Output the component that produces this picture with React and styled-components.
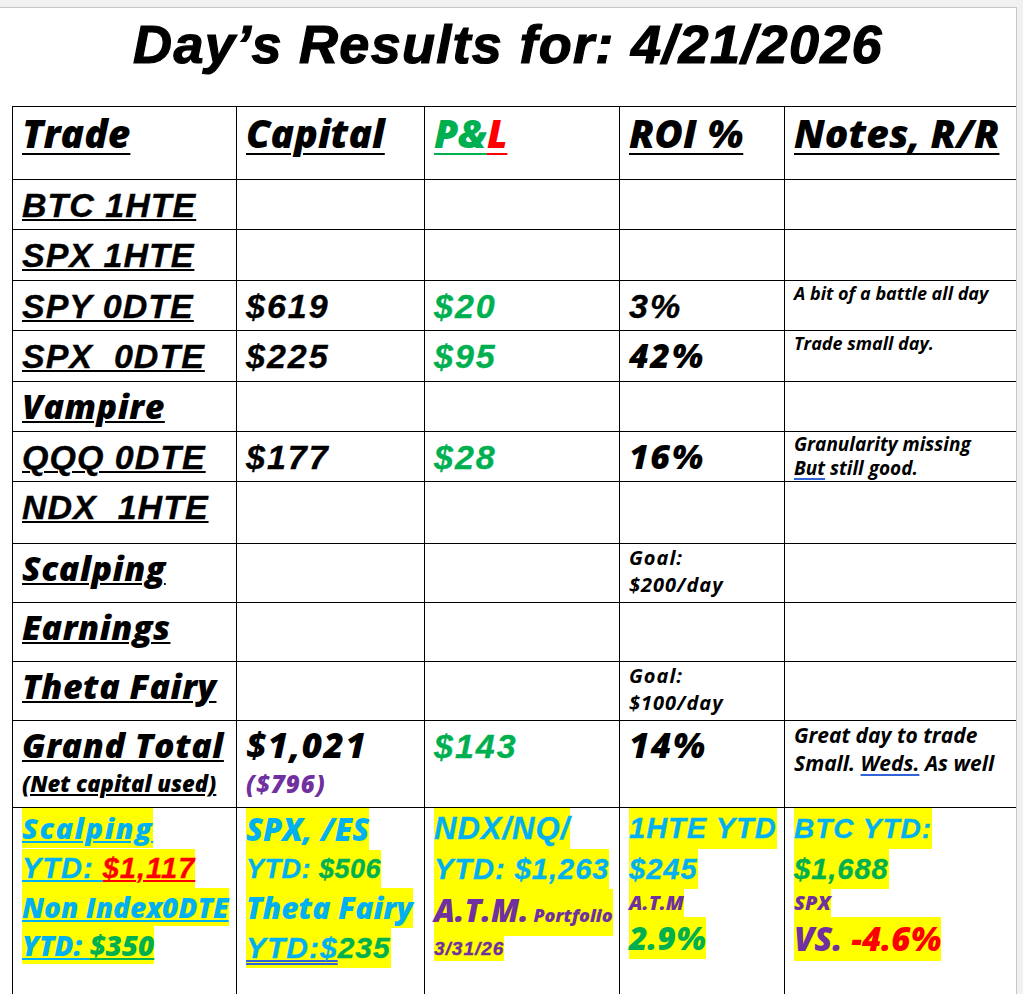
import React from 'react';
import styled, { createGlobalStyle, css } from 'styled-components';

const COL = {
  cyan: '#00b0f0',
  green: '#00b050',
  red: '#ff0000',
  purple: '#7030a0',
  yellow: '#ffff00',
  blueLine: '#2f63d6',
};

const Global = createGlobalStyle`
  html, body { margin: 0; padding: 0; background: #f1f1f1; }
  body { width: 1023px; height: 994px; overflow: hidden; }
`;

const arial = css`
  font-family: "Liberation Sans", Arial, sans-serif;
  font-weight: 700;
  font-style: italic;
  letter-spacing: 1px;
  -webkit-text-stroke: 0.35px currentColor;
`;
const sans = css`
  font-family: "Open Sans", "Liberation Sans", sans-serif;
  font-style: italic;
`;
const fontOf = (f) => (f === 'arial' ? arial : sans);

const Page = styled.div`
  margin-top: 7px;
  width: 1017px;
  height: 987px;
  box-sizing: border-box;
  background: #fff;
  border-top: 1px solid #c6c6c6;
  border-right: 1px solid #c6c6c6;
  overflow: hidden;
`;

const Title = styled.h1`
  margin: 0;
  padding-top: 5px;
  font-family: "Liberation Sans", Arial, sans-serif;
  font-weight: 700;
  font-style: italic;
  font-size: 54px;
  line-height: 62px;
  letter-spacing: 1.3px;
  -webkit-text-stroke: 1.2px #000;
  text-align: center;
  color: #000;
`;

const Table = styled.div`
  margin: 31px 0 0 12px;
  width: 1013px;
  border-top: 1px solid #000;
  border-left: 1px solid #000;
  color: #000;
`;

const Row = styled.div`
  display: grid;
  grid-template-columns: 224px 188px 195px 165px 240px;
  height: ${(p) => p.$h}px;
  box-sizing: border-box;
  border-bottom: 1px solid #000;
`;

const Cell = styled.div`
  box-sizing: border-box;
  border-right: 1px solid #000;
  padding: 0 0 0 9px;
  overflow: hidden;
  display: flex;
  flex-direction: column;
  align-items: flex-start;
`;

const underline = (thick, offset) => css`
  text-decoration: underline;
  text-decoration-thickness: ${thick}px;
  text-underline-offset: ${offset}px;
`;

const Head = styled.span`
  ${sans};
  font-weight: 800;
  font-size: 39px;
  line-height: 46px;
  margin-top: 3px;
  white-space: pre;
  ${(p) => !p.$plain && underline(2, 5)}
`;

const HeadPart = styled.span`
  color: ${(p) => p.$c};
  ${underline(2, 5)}
`;

const Name = styled.span`
  ${(p) => fontOf(p.$f)};
  font-weight: ${(p) => (p.$f === 'arial' ? 700 : 800)};
  font-size: ${(p) => p.$s || 34}px;
  line-height: 40px;
  letter-spacing: ${(p) => (p.$f === 'arial' ? 1 : 0.5)}px;
  padding-top: ${(p) => (p.$f === 'arial' ? 5 : 4)}px;
  white-space: pre;
  ${(p) => underline(p.$ut || 1.5, 2)}
`;

const Sub = styled.span`
  ${sans};
  font-weight: 800;
  font-size: ${(p) => p.$s || 22}px;
  line-height: 30px;
  margin-top: ${(p) => p.$mt || 0}px;
  letter-spacing: ${(p) => p.$ls || 0}px;
  white-space: pre;
  color: ${(p) => p.$c || '#000'};
  ${(p) => p.$u && underline(1.5, 2)}
`;

const Num = styled.span`
  ${(p) => fontOf(p.$f)};
  font-weight: ${(p) => (p.$f === 'arial' ? 700 : 800)};
  font-size: ${(p) => p.$s || 34}px;
  line-height: 40px;
  letter-spacing: ${(p) => (p.$f === 'arial' ? 2 : 1.5)}px;
  padding-top: ${(p) => (p.$f === 'arial' ? 5 : 4)}px;
  color: ${(p) => p.$c || '#000'};
  white-space: pre;
`;

const Note = styled.span`
  ${sans};
  font-weight: 700;
  font-size: ${(p) => p.$s || 18}px;
  line-height: ${(p) => p.$lh || 24}px;
  white-space: pre;
`;

const Spell = styled.span`
  text-decoration: underline;
  text-decoration-color: ${COL.blueLine};
  text-decoration-thickness: 1.5px;
  text-underline-offset: 3px;
`;

const Goal = styled.span`
  ${sans};
  font-weight: 700;
  font-size: 20px;
  line-height: 27px;
  letter-spacing: 1px;
  white-space: pre;
`;

const Hl = styled.span`
  display: block;
  width: fit-content;
  background: ${COL.yellow};
  ${(p) => fontOf(p.$f)};
  font-weight: ${(p) => p.$w || (p.$f === 'arial' ? 700 : 800)};
  font-size: ${(p) => p.$s}px;
  line-height: ${(p) => p.$lh}px;
  margin-top: ${(p) => p.$mt || 0}px;
  ${(p) => p.$ls !== undefined && css`letter-spacing: ${p.$ls}px;`}
  white-space: pre;
`;

const T = styled.span`
  color: ${(p) => p.$c};
  font-size: ${(p) => (p.$s ? `${p.$s}px` : 'inherit')};
  ${(p) =>
    p.$u &&
    css`
      text-decoration: ${p.$u === 'double' ? 'underline double' : 'underline'};
      text-decoration-color: ${p.$uc || p.$c};
      text-decoration-thickness: 1.5px;
      text-underline-offset: 2px;
    `}
`;

const rows = [
  { name: 'BTC 1HTE', f: 'arial', h: 50 },
  { name: 'SPX 1HTE', f: 'arial', h: 51 },
  {
    name: 'SPY 0DTE', f: 'arial', h: 50,
    cap: '$619', pl: '$20', roi: '3%', roiF: 'arial',
    note: ['A bit of a battle all day'],
  },
  {
    name: 'SPX  0DTE', f: 'arial', h: 51,
    cap: '$225', pl: '$95', roi: '42%', roiF: 'sans',
    note: ['Trade small day.'],
  },
  { name: 'Vampire', f: 'sans', h: 50 },
  {
    name: 'QQQ 0DTE', f: 'arial', h: 50,
    cap: '$177', pl: '$28', roi: '16%', roiF: 'sans',
    note: ['Granularity missing', <><Spell>But</Spell> still good.</>],
    noteS: 19,
  },
  { name: 'NDX  1HTE', f: 'arial', h: 62 },
  { name: 'Scalping', f: 'sans', h: 59, goal: '$200/day' },
  { name: 'Earnings', f: 'sans', h: 59 },
  { name: 'Theta Fairy', f: 'sans', h: 59, goal: '$100/day' },
];

export default function App() {
  return (
    <>
      <Global />
      <Page>
        <Title>Day’s Results for: 4/21/2026</Title>
        <Table>
          <Row $h={73}>
            <Cell><Head>Trade</Head></Cell>
            <Cell><Head>Capital</Head></Cell>
            <Cell>
              <Head $plain>
                <HeadPart $c={COL.green}>P&amp;</HeadPart>
                <HeadPart $c={COL.red}>L</HeadPart>
              </Head>
            </Cell>
            <Cell><Head>ROI %</Head></Cell>
            <Cell><Head>Notes, R/R</Head></Cell>
          </Row>

          {rows.map((r) => (
            <Row key={r.name} $h={r.h}>
              <Cell>
                <Name $f={r.f}>{r.name}</Name>
              </Cell>
              <Cell>{r.cap && <Num $f="arial">{r.cap}</Num>}</Cell>
              <Cell>{r.pl && <Num $f="arial" $c={COL.green}>{r.pl}</Num>}</Cell>
              <Cell>
                {r.roi && <Num $f={r.roiF}>{r.roi}</Num>}
                {r.goal && (
                  <>
                    <Goal>Goal:</Goal>
                    <Goal>{r.goal}</Goal>
                  </>
                )}
              </Cell>
              <Cell>
                {r.note && r.note.map((n, i) => (
                  <Note key={i} $s={r.noteS}>{n}</Note>
                ))}
              </Cell>
            </Row>
          ))}

          <Row $h={87}>
            <Cell>
              <Name $f="sans" $s={34} $ut={2}>Grand Total</Name>
              <Sub $u $mt={3}>(Net capital used)</Sub>
            </Cell>
            <Cell>
              <Num $f="sans" $s={35}>$1,021</Num>
              <Sub $c={COL.purple} $s={24} $ls={1} $mt={4}>($796)</Sub>
            </Cell>
            <Cell>
              <Num $f="arial" $c={COL.green}>$143</Num>
            </Cell>
            <Cell>
              <Num $f="sans" $s={35}>14%</Num>
            </Cell>
            <Cell>
              <Note $s={21} $lh={28}>Great day to trade</Note>
              <Note $s={21} $lh={28}>Small. <Spell>Weds.</Spell> As well</Note>
            </Cell>
          </Row>

          <Row $h={200}>
            <Cell>
              <Hl $f="sans" $s={29} $lh={40} $ls={1.5}><T $c={COL.cyan} $u>Scalping</T></Hl>
              <Hl $f="arial" $s={29} $lh={39} $mt={1}>
                <T $c={COL.cyan} $u>YTD: </T><T $c={COL.red} $u>$1,117</T>
              </Hl>
              <Hl $f="sans" $s={28} $lh={38}><T $c={COL.cyan} $u>Non Index0DTE</T></Hl>
              <Hl $f="sans" $s={28} $lh={38}>
                <T $c={COL.cyan} $u>YTD: </T><T $c={COL.green} $u>$350</T>
              </Hl>
            </Cell>
            <Cell>
              <Hl $f="sans" $s={31} $lh={42}><T $c={COL.cyan}>SPX, /ES</T></Hl>
              <Hl $f="arial" $s={27} $lh={38} $ls={0.5}>
                <T $c={COL.cyan}>YTD: </T><T $c={COL.green}>$506</T>
              </Hl>
              <Hl $f="sans" $s={30} $lh={40}><T $c={COL.cyan}>Theta Fairy</T></Hl>
              <Hl $f="arial" $s={30} $lh={40}>
                <T $c={COL.cyan} $u="double" $uc={COL.blueLine}>YTD:$</T><T $c={COL.green}>235</T>
              </Hl>
            </Cell>
            <Cell>
              <Hl $f="arial" $s={31} $lh={41}><T $c={COL.cyan}>NDX/NQ/</T></Hl>
              <Hl $f="arial" $s={29} $lh={40}><T $c={COL.cyan}>YTD: $1,263</T></Hl>
              <Hl $f="sans" $s={31} $lh={42}>
                <T $c={COL.purple}>A.T.M.</T><T $c={COL.purple} $s={18}> Portfolio</T>
              </Hl>
              <Hl $f="arial" $s={19} $lh={25}><T $c={COL.purple}>3/31/26</T></Hl>
            </Cell>
            <Cell>
              <Hl $f="arial" $s={29} $lh={41}><T $c={COL.cyan}>1HTE YTD</T></Hl>
              <Hl $f="arial" $s={29} $lh={40}><T $c={COL.cyan}>$245</T></Hl>
              <Hl $f="sans" $s={20} $lh={28}><T $c={COL.purple}>A.T.M</T></Hl>
              <Hl $f="sans" $s={32} $lh={42}><T $c={COL.green}>2.9%</T></Hl>
            </Cell>
            <Cell>
              <Hl $f="arial" $s={28} $lh={41}><T $c={COL.cyan}>BTC YTD:</T></Hl>
              <Hl $f="arial" $s={29} $lh={40}><T $c={COL.green}>$1,688</T></Hl>
              <Hl $f="sans" $s={20} $lh={28}><T $c={COL.purple}>SPX</T></Hl>
              <Hl $f="sans" $s={33} $lh={44}>
                <T $c={COL.purple}>VS.</T><T $c={COL.red}> -4.6%</T>
              </Hl>
            </Cell>
          </Row>
        </Table>
      </Page>
    </>
  );
}
